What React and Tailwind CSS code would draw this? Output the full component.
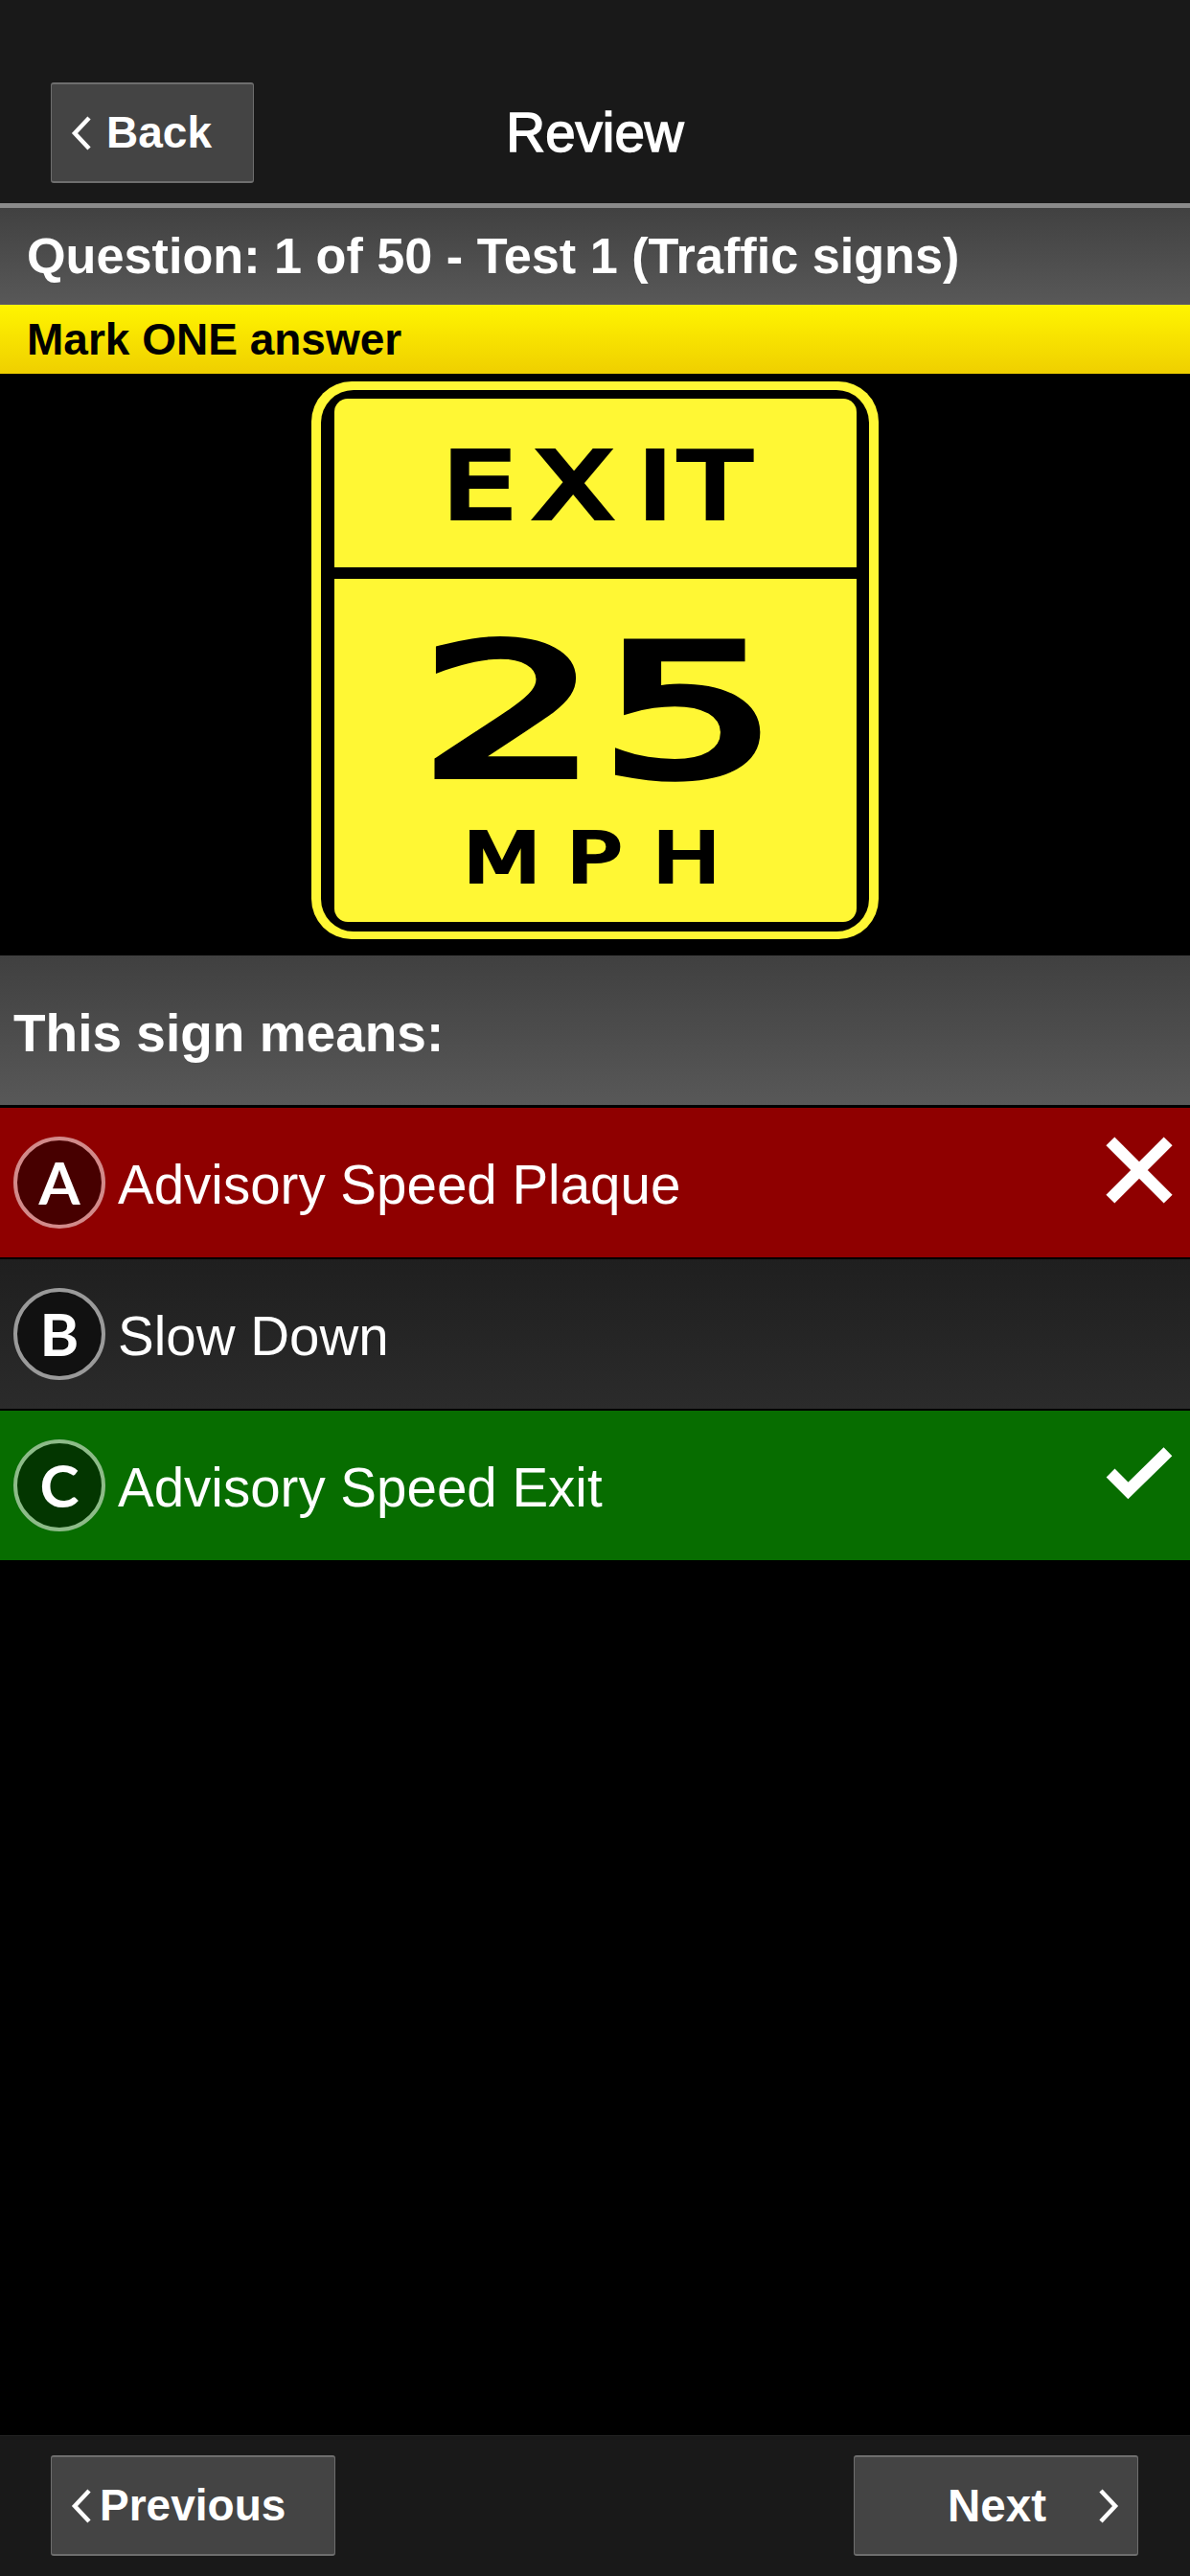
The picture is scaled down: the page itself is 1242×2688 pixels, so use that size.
import React from 'react';

const font = { fontFamily: '"Liberation Sans", Arial, sans-serif' };

const Chevron = ({ dir = 'left', className = '' }) => (
  <svg viewBox="0 0 22 36" className={className} fill="none" stroke="#fff" strokeWidth="4.5">
    <path d={dir === 'left' ? 'M19 2 L4 18 L19 34' : 'M3 2 L18 18 L3 34'} />
  </svg>
);

const NavButton = ({ className = '', children }) => (
  <div className={`flex h-[105px] items-center rounded-[3px] border border-[#6e6e6e] border-t-[2px] border-b-[2px] bg-[#444444] font-bold text-[46px] text-white ${className}`}>
    {children}
  </div>
);

// the road sign is a picture in the reference, so it is drawn here, lettering kept as <text>
const Sign = () => (
  <svg viewBox="0 0 592 582" className="block h-[582px] w-[592px]">
    <rect x="0" y="0" width="592" height="582" rx="42" fill="#fff734" />
    <rect x="10" y="9" width="572" height="565" rx="34" fill="#000" />
    <rect x="24" y="18" width="545" height="546" rx="14" fill="#fff734" />
    <rect x="24" y="194" width="545" height="12" fill="#000" />
    <g fill="#000" stroke="#000" fontFamily="'DejaVu Sans', sans-serif">
      <text transform="scale(1.25,1)" x="110 186 273 308" y="142" fontSize="95" strokeWidth="6">EXIT</text>
      <text transform="scale(1.55,1)" x="73" y="411" fontSize="190" strokeWidth="8">25</text>
      <text transform="scale(1.3,1)" x="122 205 274" y="522" fontSize="72" strokeWidth="4">MPH</text>
    </g>
  </svg>
);

const answers = [
  { letter: 'A', text: 'Advisory Speed Plaque', bar: 'bg-[#8f0000]', disc: 'bg-[#470000] border-[#d28a8a]', mark: 'x' },
  { letter: 'B', text: 'Slow Down', bar: 'bg-gradient-to-b from-[#1f1f1f] to-[#2b2b2b]', disc: 'bg-[#111111] border-[#9a9a9a]' },
  { letter: 'C', text: 'Advisory Speed Exit', bar: 'bg-[#076d00]', disc: 'bg-[#033600] border-[#8dbb88]', mark: 'check' },
];

const AnswerRow = ({ answer }) => (
  <div className={`flex h-[158px] items-center border-b-[2px] border-black pl-[14px] pr-[18px] ${answer.bar}`}>
    <div
      className={`flex h-[96px] w-[96px] shrink-0 items-center justify-center rounded-full border-[4px] pb-[3px] text-[62px] leading-none text-white ${answer.disc}`}
      style={{ fontFamily: 'Lato, sans-serif', fontWeight: 700 }}
    >
      {answer.letter}
    </div>
    <span className="ml-[13px] flex-1 pt-[6px] text-[56.5px] leading-none text-white">{answer.text}</span>
    {answer.mark === 'x' && (
      <svg viewBox="0 0 72 72" className="mb-[26px] h-[70px] w-[70px]" stroke="#fff" strokeWidth="13">
        <path d="M5 5 L67 67 M67 5 L5 67" />
      </svg>
    )}
    {answer.mark === 'check' && (
      <svg viewBox="0 0 72 58" className="mb-[24px] h-[56px] w-[70px]" fill="none" stroke="#fff" strokeWidth="13">
        <path d="M5 28 L24 47 L67 5" />
      </svg>
    )}
  </div>
);

export default function App() {
  return (
    <div className="flex h-[2688px] w-[1242px] flex-col bg-black" style={font}>
      <header className="grid h-[212px] grid-cols-[1fr_auto_1fr] items-start bg-[#191919] pl-[53px] pr-[53px] pt-[86px]">
        <NavButton className="w-[212px] pl-[20px]">
          <Chevron className="h-[36px] w-[22px]" />
          <span className="ml-[15px]">Back</span>
        </NavButton>
        <h1 className="mt-[22px] text-[56.5px] font-normal leading-[62px] text-white [-webkit-text-stroke:1.5px_white]">Review</h1>
        <div />
      </header>
      <div className="h-[5px] bg-[#8a8a8a]" />

      <div className="flex h-[101px] items-center border-b border-[#5a5a66] bg-gradient-to-b from-[#414141] to-[#585858] pl-[28px]">
        <span className="text-[52.2px] font-bold leading-none text-white">Question: 1 of 50 - Test 1 (Traffic signs)</span>
      </div>
      <div className="flex h-[72px] items-center bg-gradient-to-b from-[#fff500] to-[#efcf00] pl-[28px]">
        <span className="text-[46px] font-bold leading-none text-black">Mark ONE answer</span>
      </div>

      <div className="flex justify-center pb-[17px] pt-[8px]">
        <Sign />
      </div>

      <div className="flex h-[159px] items-center border-b-[3px] border-black bg-gradient-to-b from-[#404040] to-[#585858] pl-[14px] pt-[6px]">
        <span className="text-[55px] font-bold leading-none text-white">This sign means:</span>
      </div>

      {answers.map((a) => <AnswerRow key={a.letter} answer={a} />)}

      <div className="flex-1" />

      <footer className="flex h-[147px] items-start justify-between border-t border-[#222222] bg-[#191919] pl-[53px] pr-[54px] pt-[20px]">
        <NavButton className="w-[297px] pl-[20px]">
          <Chevron className="h-[36px] w-[22px]" />
          <span className="ml-[8px]">Previous</span>
        </NavButton>
        <NavButton className="w-[297px] justify-end pr-[19px]">
          <span className="text-[47.5px]">Next</span>
          <Chevron dir="right" className="ml-[54px] h-[36px] w-[22px]" />
        </NavButton>
      </footer>
    </div>
  );
}
